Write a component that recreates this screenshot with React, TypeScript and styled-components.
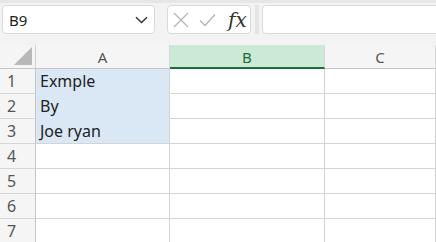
import React from 'react';
import styled, { createGlobalStyle } from 'styled-components';

const GlobalStyle = createGlobalStyle`
  html, body {
    margin: 0;
    padding: 0;
    background: #ffffff;
    overflow: hidden;
  }
  body {
    font-family: "Noto Sans", "Open Sans", "Liberation Sans", sans-serif;
  }
`;

const Page = styled.div`
  width: 436px;
  height: 242px;
  overflow: hidden;
  background: #ffffff;
`;

const Toolbar = styled.div`
  height: 45px;
  box-sizing: border-box;
  background: #f3f3f3;
  border-top: 3px solid #e6e6e6;
  display: flex;
  align-items: flex-start;
  padding: 2px 0 0 2px;
`;

const Box = styled.div<{ $w: number }>`
  width: ${(p) => p.$w}px;
  height: 29px;
  box-sizing: border-box;
  background: #ffffff;
  border: 1px solid #dadada;
  border-radius: 4px;
  display: flex;
  align-items: center;
  flex-shrink: 0;
`;

const NameText = styled.span`
  flex: 1;
  padding-left: 6px;
  font-size: 15px;
  color: #222;
`;

const Chevron = styled.svg`
  margin-right: 6px;
`;

const Gap = styled.div<{ $w: number }>`
  width: ${(p) => p.$w}px;
  flex-shrink: 0;
`;

const Divider = styled.div`
  width: 4px;
  height: 29px;
  margin: 0 3px 0 4px;
  background: #e4e4e4;
  flex-shrink: 0;
`;

const IconRow = styled.div`
  display: flex;
  align-items: center;
  gap: 10px;
  padding-left: 5px;
`;

const Fx = styled.span`
  font-family: "DejaVu Serif", "Liberation Serif", serif;
  font-style: italic;
  font-size: 20px;
  color: #333;
  margin-left: 2px;
  line-height: 1;
`;

const Grid = styled.div`
  display: grid;
  grid-template-columns: 36px 134px 155px 1fr;
  grid-template-rows: 24px;
  grid-auto-rows: 25px;
`;

const Corner = styled.div`
  background: #f5f5f5;
  border-right: 1px solid #d0d0d0;
  border-bottom: 1px solid #c6c6c6;
  box-sizing: border-box;
  display: flex;
  align-items: flex-end;
  justify-content: flex-end;
  padding: 0 3px 3px 0;
`;

const ColHead = styled.div<{ $active?: boolean }>`
  box-sizing: border-box;
  background: ${(p) => (p.$active ? '#caead6' : '#f5f5f5')};
  border-right: 1px solid #d6d6d6;
  border-bottom: ${(p) => (p.$active ? '2px solid #1d6b40' : '1px solid #c6c6c6')};
  color: ${(p) => (p.$active ? '#1d6b40' : '#555')};
  font-size: 15px;
  display: flex;
  align-items: center;
  justify-content: center;
  padding-top: ${(p) => (p.$active ? '1px' : '0')};
`;

const RowHead = styled.div`
  box-sizing: border-box;
  background: #f5f5f5;
  border-right: 1px solid #c6c6c6;
  border-bottom: 1px solid #d6d6d6;
  color: #555;
  font-size: 16px;
  display: flex;
  align-items: center;
  padding-left: 7px;
`;

const Cell = styled.div<{ $selected?: boolean; $joinBelow?: boolean }>`
  box-sizing: border-box;
  background: ${(p) => (p.$selected ? '#dae7f5' : '#ffffff')};
  border-right: 1px solid #d4d4d4;
  border-bottom: 1px solid ${(p) => (p.$joinBelow ? '#dae7f5' : '#d4d4d4')};
  color: #222;
  font-size: 16px;
  display: flex;
  align-items: center;
  padding-left: 4px;
  white-space: nowrap;
`;

const data: Record<number, string> = { 1: 'Exmple', 2: 'By', 3: 'Joe ryan' };

export default function App() {
  const rows = [1, 2, 3, 4, 5, 6, 7];
  return (
    <Page>
      <GlobalStyle />
      <Toolbar>
        <Box $w={153}>
          <NameText>B9</NameText>
          <Chevron width="13" height="8" viewBox="0 0 13 8">
            <path d="M1 1.2 L6.5 6.5 L12 1.2" fill="none" stroke="#333" strokeWidth="1.4" />
          </Chevron>
        </Box>
        <Gap $w={12} />
        <Box $w={84}>
          <IconRow>
            <svg width="16" height="16" viewBox="0 0 16 16">
              <path d="M1 1 L15 15 M15 1 L1 15" stroke="#b4b4b4" strokeWidth="1.3" fill="none" />
            </svg>
            <svg width="17" height="14" viewBox="0 0 17 14">
              <path d="M1 7.5 L6 12.5 L16 1.5" stroke="#b4b4b4" strokeWidth="1.3" fill="none" />
            </svg>
            <Fx>fx</Fx>
          </IconRow>
        </Box>
        <Divider />
        <Box $w={180} />
      </Toolbar>
      <Grid>
        <Corner>
          <svg width="18" height="18" viewBox="0 0 18 18">
            <path d="M18 0 L18 18 L0 18 Z" fill="#b8b8b8" />
          </svg>
        </Corner>
        <ColHead>A</ColHead>
        <ColHead $active>B</ColHead>
        <ColHead>C</ColHead>
        {rows.map((r) => (
          <React.Fragment key={r}>
            <RowHead>{r}</RowHead>
            <Cell $selected={r <= 3} $joinBelow={r < 3}>
              {data[r] ?? ''}
            </Cell>
            <Cell />
            <Cell />
          </React.Fragment>
        ))}
      </Grid>
    </Page>
  );
}
